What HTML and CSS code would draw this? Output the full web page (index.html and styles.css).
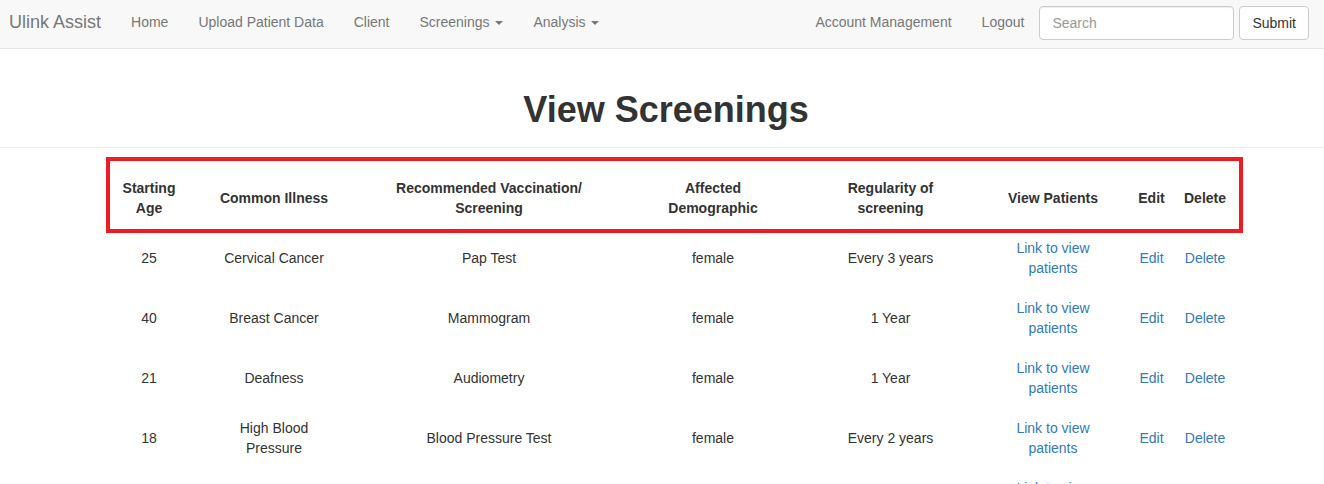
FILE: index.html
```html
<!DOCTYPE html>
<html>
<head>
<meta charset="utf-8">
<title>View Screenings</title>
<link rel="stylesheet" href="styles.css">
</head>
<body>
<nav class="navbar">
  <a class="brand" href="#">Ulink Assist</a>
  <ul class="nav">
    <li><a href="#">Home</a></li>
    <li><a href="#">Upload Patient Data</a></li>
    <li><a href="#">Client</a></li>
    <li><a href="#">Screenings <span class="caret"></span></a></li>
    <li><a href="#">Analysis <span class="caret"></span></a></li>
  </ul>
  <ul class="nav nav-right">
    <li><a href="#">Account Management</a></li>
    <li><a href="#">Logout</a></li>
  </ul>
  <form class="nav-form">
    <input class="search" type="text" placeholder="Search">
    <button class="btn" type="button">Submit</button>
  </form>
</nav>

<h1 class="title">View Screenings</h1>
<hr class="rule">

<div class="table-wrap">
  <table class="screenings">
    <colgroup>
      <col class="c1"><col class="c2"><col class="c3"><col class="c4"><col class="c5"><col class="c6"><col class="c7"><col class="c8">
    </colgroup>
    <thead>
      <tr>
        <th>Starting<br>Age</th>
        <th>Common Illness</th>
        <th>Recommended Vaccination/<br>Screening</th>
        <th>Affected<br>Demographic</th>
        <th>Regularity of<br>screening</th>
        <th>View Patients</th>
        <th>Edit</th>
        <th>Delete</th>
      </tr>
    </thead>
    <tbody>
      <tr>
        <td>25</td><td>Cervical Cancer</td><td>Pap Test</td><td>female</td><td>Every 3 years</td>
        <td><a href="#">Link to view<br>patients</a></td><td><a href="#">Edit</a></td><td><a href="#">Delete</a></td>
      </tr>
      <tr>
        <td>40</td><td>Breast Cancer</td><td>Mammogram</td><td>female</td><td>1 Year</td>
        <td><a href="#">Link to view<br>patients</a></td><td><a href="#">Edit</a></td><td><a href="#">Delete</a></td>
      </tr>
      <tr>
        <td>21</td><td>Deafness</td><td>Audiometry</td><td>female</td><td>1 Year</td>
        <td><a href="#">Link to view<br>patients</a></td><td><a href="#">Edit</a></td><td><a href="#">Delete</a></td>
      </tr>
      <tr>
        <td>18</td><td>High Blood<br>Pressure</td><td>Blood Pressure Test</td><td>female</td><td>Every 2 years</td>
        <td><a href="#">Link to view<br>patients</a></td><td><a href="#">Edit</a></td><td><a href="#">Delete</a></td>
      </tr>
      <tr>
        <td>50</td><td>Colon Cancer</td><td>Colonoscopy</td><td>male</td><td>Every 10 years</td>
        <td><a href="#">Link to view<br>patients</a></td><td><a href="#">Edit</a></td><td><a href="#">Delete</a></td>
      </tr>
    </tbody>
  </table>
  <div class="highlight"></div>
</div>
</body>
</html>
```

FILE: styles.css
```css
* { box-sizing: border-box; }

html, body {
  margin: 0;
  padding: 0;
  background: #fff;
  font-family: "Liberation Sans", Arial, Helvetica, sans-serif;
  font-size: 14px;
  line-height: 20px;
  color: #333;
}

a { color: #337ab7; text-decoration: none; }

.navbar {
  display: flex;
  align-items: flex-start;
  height: 49px;
  background: #f8f8f8;
  border-bottom: 1px solid #e7e7e7;
  padding: 0 15px 0 0;
}

.brand {
  color: #777;
  font-size: 18px;
  line-height: 20px;
  padding: 12px 15px 14px 9px;
}

.nav {
  list-style: none;
  margin: 0;
  padding: 0;
  display: flex;
}

.nav a {
  display: block;
  padding: 12px 15px 14px;
  color: #777;
  line-height: 20px;
}

.nav-right { margin-left: auto; }

.caret {
  display: inline-block;
  width: 0;
  height: 0;
  margin-left: 2px;
  vertical-align: middle;
  border-top: 4px solid #777;
  border-left: 4px solid transparent;
  border-right: 4px solid transparent;
}

.nav-form {
  display: flex;
  align-items: center;
  gap: 5px;
  margin: 6px 0 0 0;
}

.search {
  width: 195px;
  height: 34px;
  padding: 6px 12px;
  font-family: inherit;
  font-size: 14px;
  color: #555;
  background: #fff;
  border: 1px solid #ccc;
  border-radius: 4px;
  box-shadow: inset 0 1px 1px rgba(0,0,0,0.075);
}

.search::placeholder { color: #999; }

.btn {
  height: 34px;
  padding: 6px 12px;
  font-family: inherit;
  font-size: 14px;
  color: #333;
  background: #fff;
  border: 1px solid #ccc;
  border-radius: 4px;
}

.title {
  margin: 41px 0 0 8px;
  text-align: center;
  font-size: 36px;
  line-height: 40px;
  font-weight: bold;
  color: #333;
}

.rule {
  margin: 17px 0 0 0;
  border: 0;
  border-top: 1px solid #eee;
}

.table-wrap {
  position: relative;
  padding: 22px 0 0 110px;
}

.screenings {
  width: 1130px;
  border-collapse: collapse;
  table-layout: fixed;
}

.c1 { width: 78px; }
.c2 { width: 172px; }
.c3 { width: 258px; }
.c4 { width: 190px; }
.c5 { width: 165px; }
.c6 { width: 160px; }
.c7 { width: 37px; }
.c8 { width: 70px; }

.screenings th {
  padding: 8px 2px 10px;
  font-weight: bold;
  text-align: center;
  vertical-align: middle;
  line-height: 20px;
}

.screenings td {
  padding: 10px 2px;
  text-align: center;
  vertical-align: middle;
  line-height: 20px;
}

.highlight {
  position: absolute;
  left: 106px;
  top: 9px;
  width: 1137px;
  height: 76px;
  border: 4px solid #ed1c24;
  pointer-events: none;
}
```
